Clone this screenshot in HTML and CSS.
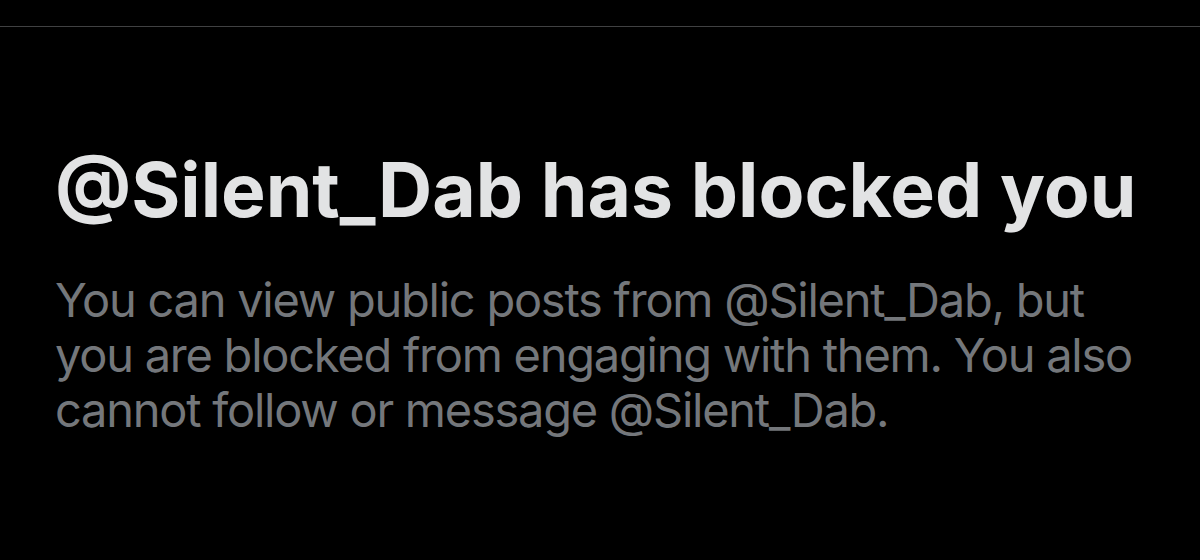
FILE: index.html
```html
<!DOCTYPE html>
<html lang="en">
<head>
<meta charset="utf-8">
<title>Blocked</title>
<link rel="stylesheet" href="styles.css">
</head>
<body>
<div class="topbar"></div>
<main class="empty-state">
  <h1 class="title">@Silent_Dab has blocked you</h1>
  <p class="message">You can view public posts from @Silent_Dab, but you are blocked from engaging with them. You also cannot follow or message @Silent_Dab.</p>
</main>
</body>
</html>
```
FILE: styles.css
```css
html, body {
  margin: 0;
  padding: 0;
  background: #000;
  height: 100%;
}
body {
  font-family: Inter, "Noto Sans", "Liberation Sans", sans-serif;
  overflow: hidden;
}
.topbar {
  height: 26px;
  border-bottom: 1px solid #404142;
}
.empty-state {
  padding: 118px 40px 0 55px;
}
.title {
  margin: 0;
  font-size: 75px;
  font-weight: 700;
  line-height: 90px;
  color: #e2e3e4;
  white-space: nowrap;
}
.message {
  margin: 37px 0 0;
  font-size: 47px;
  font-weight: 400;
  line-height: 55px;
  letter-spacing: -1.25px;
  color: #74777b;
  width: 1095px;
}
```
